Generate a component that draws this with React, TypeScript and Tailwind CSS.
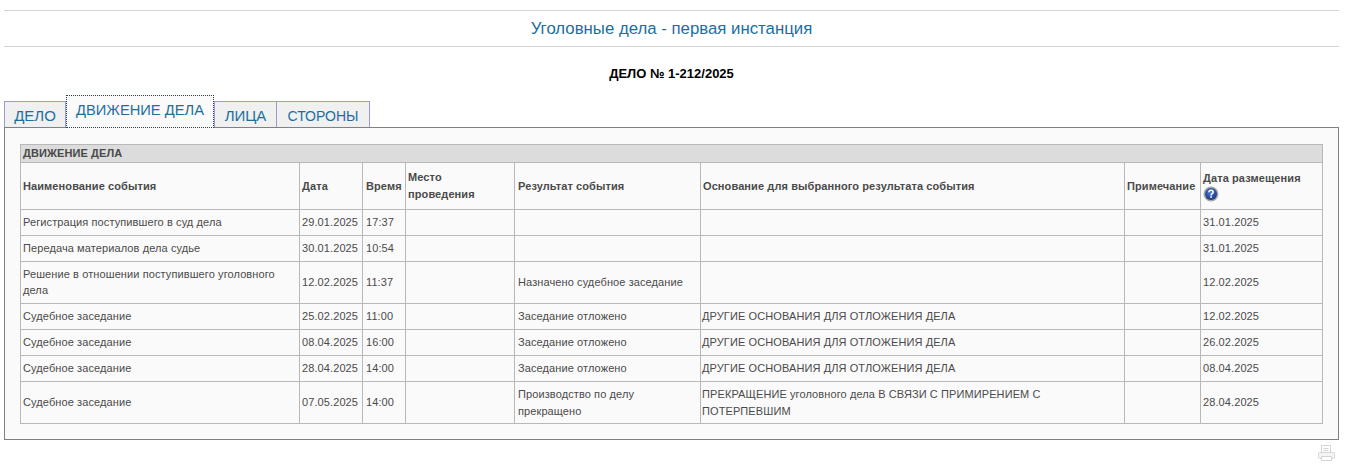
const rows = [
  { name: "Регистрация поступившего в суд дела", date: "29.01.2025", time: "17:37", place: "", result: "", reason: "", note: "", posted: "31.01.2025", h: "h-[26px]" },
  { name: "Передача материалов дела судье", date: "30.01.2025", time: "10:54", place: "", result: "", reason: "", note: "", posted: "31.01.2025", h: "h-[26px]" },
  { name: "Решение в отношении поступившего уголовного дела", date: "12.02.2025", time: "11:37", place: "", result: "Назначено судебное заседание", reason: "", note: "", posted: "12.02.2025", h: "h-[42px]" },
  { name: "Судебное заседание", date: "25.02.2025", time: "11:00", place: "", result: "Заседание отложено", reason: "ДРУГИЕ ОСНОВАНИЯ ДЛЯ ОТЛОЖЕНИЯ ДЕЛА", note: "", posted: "12.02.2025", h: "h-[26px]" },
  { name: "Судебное заседание", date: "08.04.2025", time: "16:00", place: "", result: "Заседание отложено", reason: "ДРУГИЕ ОСНОВАНИЯ ДЛЯ ОТЛОЖЕНИЯ ДЕЛА", note: "", posted: "26.02.2025", h: "h-[26px]" },
  { name: "Судебное заседание", date: "28.04.2025", time: "14:00", place: "", result: "Заседание отложено", reason: "ДРУГИЕ ОСНОВАНИЯ ДЛЯ ОТЛОЖЕНИЯ ДЕЛА", note: "", posted: "08.04.2025", h: "h-[26px]" },
  { name: "Судебное заседание", date: "07.05.2025", time: "14:00", place: "", result: "Производство по делу прекращено", reason: "ПРЕКРАЩЕНИЕ уголовного дела В СВЯЗИ С ПРИМИРЕНИЕМ С ПОТЕРПЕВШИМ", note: "", posted: "28.04.2025", h: "h-[42px] leading-[17px]", wrapped: true },
];

const cell = "border border-[#b8b8b8] px-[2px] pt-0 pb-[1px] align-middle";
const head = `${cell} text-left font-bold`;

const Tab = ({ label, className }: { label: string; className: string }) => (
  <div className={`flex items-center justify-center border border-b-0 border-[#9c9ccc] bg-[#f0f0f0] pt-[4px] text-[#1a6f9f] ${className}`}>
    {label}
  </div>
);

const HelpIcon = () => (
  <svg width="16" height="16" viewBox="0 0 16 16" className="block">
    <defs>
      <radialGradient id="helpBlue" cx="0.45" cy="0.35" r="0.7">
        <stop offset="0" stopColor="#4f7fd0" />
        <stop offset="1" stopColor="#142f80" />
      </radialGradient>
    </defs>
    <circle cx="8" cy="8" r="7.5" fill="#a8a8a8" />
    <circle cx="8" cy="8" r="6" fill="url(#helpBlue)" />
    <path d="M5.9 6.2c.1-1.3 1-2 2.2-2s2.1.7 2.1 1.8c0 1.7-2.1 1.6-2.1 3.4" fill="none" stroke="#fff" strokeWidth="1.5" />
    <rect x="7.3" y="10.2" width="1.6" height="1.6" fill="#fff" />
  </svg>
);

const PrinterIcon = () => (
  <svg width="17" height="17" viewBox="0 0 17 17" fill="none" stroke="#d4d4d4" strokeWidth="1">
    <path d="M3.5 7.5V.5h9v7" />
    <path d="M5.5 3.5h5M5.5 5.5h5" />
    <rect x=".5" y="7.5" width="16" height="6" rx="1" fill="#f4f4f4" />
    <path d="M3.5 11.5v4h10v-4z" fill="#fff" />
  </svg>
);

export default function App() {
  return (
    <div className="min-h-[466px] bg-white px-[4px] pt-[10px] font-['Liberation_Sans',Arial,sans-serif] text-[#4a4a4a]">
      <div className="mr-[11px]">
        <div className="flex h-[37px] items-center justify-center border-y border-[#d3d3d3] text-[16.8px] text-[#1a6f9f]">
          Уголовные дела - первая инстанция
        </div>

        <div className="mt-[20px] text-center text-[13px] leading-[14px] font-bold text-black">
          ДЕЛО № 1-212/2025
        </div>

        <div className="mt-[14px] flex h-[32px] items-end">
          <Tab label="ДЕЛО" className="h-[26px] w-[62px] text-[15px]" />
          <div className="relative z-10 -mb-px flex h-[33px] w-[148px] items-start justify-center border border-dotted border-[#20405a] bg-[#fafafa] pt-[3px] text-[14.7px] text-[#1a6f9f]">
            ДВИЖЕНИЕ ДЕЛА
          </div>
          <Tab label="ЛИЦА" className="h-[26px] w-[63px] text-[15px]" />
          <Tab label="СТОРОНЫ" className="-ml-px h-[26px] w-[94px] text-[14px]" />
        </div>

        <div className="border border-[#808080] bg-[#fafafa] px-[15px] pt-[16px] pb-[15px]">
          <table className="w-[1302px] table-fixed border-collapse text-[11px] leading-[16px] tracking-[0.1px]">
            <colgroup>
              <col className="w-[279px]" />
              <col className="w-[63px]" />
              <col className="w-[43px]" />
              <col className="w-[109px]" />
              <col className="w-[186px]" />
              <col className="w-[424px]" />
              <col className="w-[76px]" />
              <col className="w-[122px]" />
            </colgroup>
            <tbody>
              <tr className="h-[18px] bg-[#dcdcdc]">
                <td colSpan={8} className={`${cell} font-bold`}>ДВИЖЕНИЕ ДЕЛА</td>
              </tr>
              <tr className="h-[47px]">
                <th className={head}>Наименование события</th>
                <th className={head}>Дата</th>
                <th className={`${head} pl-[3px]`}>Время</th>
                <th className={`${head} leading-[17px]`}>Место<br />проведения</th>
                <th className={`${head} pl-[3px]`}>Результат события</th>
                <th className={head}>Основание для выбранного результата события</th>
                <th className={head}>Примечание</th>
                <th className={head}>
                  Дата размещения
                  <HelpIcon />
                </th>
              </tr>
              {rows.map((row, i) => (
                <tr key={i} className={row.h}>
                  <td className={cell}>{row.name}</td>
                  <td className={cell}>{row.date}</td>
                  <td className={`${cell} pl-[3px]`}>{row.time}</td>
                  <td className={cell}>{row.place}</td>
                  <td className={`${cell} pl-[3px] ${row.wrapped ? "pt-[1px] pb-0" : ""}`}>{row.result}</td>
                  <td className={`${cell} pl-[1px] ${row.wrapped ? "pt-[1px] pb-0" : ""}`}>{row.reason}</td>
                  <td className={cell}>{row.note}</td>
                  <td className={cell}>{row.posted}</td>
                </tr>
              ))}
            </tbody>
          </table>
        </div>

        <div className="mt-[5px] flex justify-end pr-[4px]">
          <PrinterIcon />
        </div>
      </div>
    </div>
  );
}
